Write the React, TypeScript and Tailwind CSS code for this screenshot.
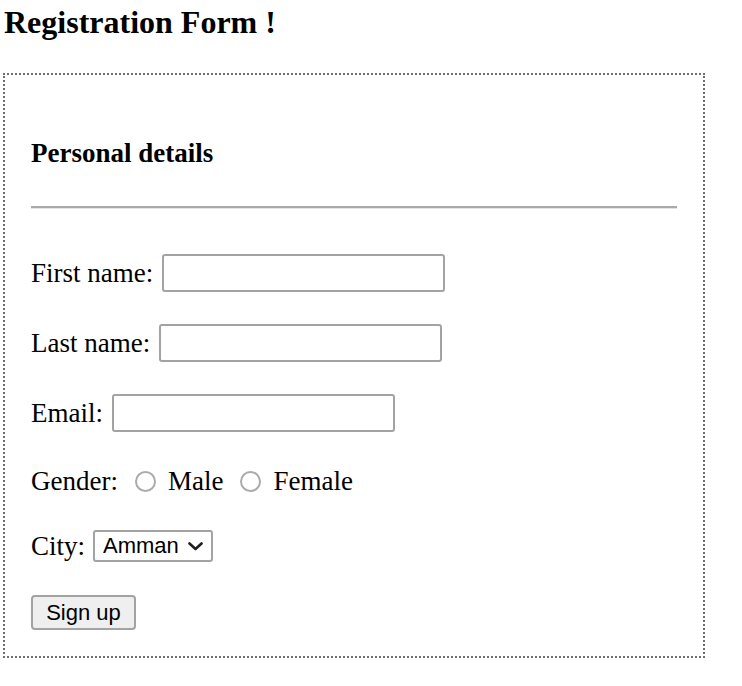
const serif = "font-['Liberation_Serif','Times_New_Roman',serif]";

function TextRow({ label }: { label: string }) {
  return (
    <div className="flex items-center gap-[9px]">
      <span className="text-[27px] leading-none">{label}</span>
      <input
        type="text"
        className="w-[283px] h-[38px] border-2 border-[#a3a3a3] rounded-[3px] bg-white"
      />
    </div>
  );
}

function Radio({ label }: { label: string }) {
  return (
    <div className="flex items-center gap-[12px]">
      <span className="w-[21px] h-[21px] rounded-full border-2 border-[#ababab] bg-white" />
      <span className="text-[27px] leading-none">{label}</span>
    </div>
  );
}

export default function App() {
  return (
    <div className={`${serif} text-black bg-white min-h-[686px] pl-[3px] pt-[6px]`}>
      <h3 className="text-[32px] leading-none font-bold ml-[1px]">Registration Form !</h3>

      <div className="w-[702px] mt-[35px] border-2 border-dotted border-[#6f6f6f] px-[26px] pt-[65px] pb-[26px]">
        <h4 className="text-[27px] leading-none font-bold">Personal details</h4>
        <div className="mt-[39px] border-t-2 border-[#a9a9a9] border-b border-b-[#e4e4e4]" />

        <div className="mt-[45px] flex flex-col">
          <TextRow label="First name:" />
          <div className="mt-[32px]">
            <TextRow label="Last name:" />
          </div>
          <div className="mt-[32px]">
            <TextRow label="Email:" />
          </div>

          <div className="mt-[36px] flex items-center">
            <span className="text-[27px] leading-none">Gender:</span>
            <div className="ml-[17px]">
              <Radio label="Male" />
            </div>
            <div className="ml-[17px]">
              <Radio label="Female" />
            </div>
          </div>

          <div className="mt-[35px] flex items-center gap-[8px]">
            <span className="text-[27px] leading-none">City:</span>
            <div className="relative w-[120px] h-[32px]">
              <select className="appearance-none w-full h-full border-2 border-[#a3a3a3] rounded-[3px] bg-white pl-[8px] font-['Liberation_Sans',Arial,sans-serif] text-[22px] leading-none text-black">
                <option>Amman</option>
              </select>
              <svg
                className="absolute right-[10px] top-[12px] pointer-events-none"
                width="15"
                height="9"
                viewBox="0 0 15 9"
                fill="none"
              >
                <path d="M1.5 1.5 L7.5 7 L13.5 1.5" stroke="#1f1f1f" strokeWidth="2.6" strokeLinecap="round" strokeLinejoin="round" />
              </svg>
            </div>
          </div>

          <div className="mt-[33px]">
            <button className="w-[105px] h-[35px] border-2 border-[#a3a3a3] rounded-[4px] bg-[#efefef] font-['Liberation_Sans',Arial,sans-serif] text-[22px] leading-none text-black">
              Sign up
            </button>
          </div>
        </div>
      </div>
    </div>
  );
}
